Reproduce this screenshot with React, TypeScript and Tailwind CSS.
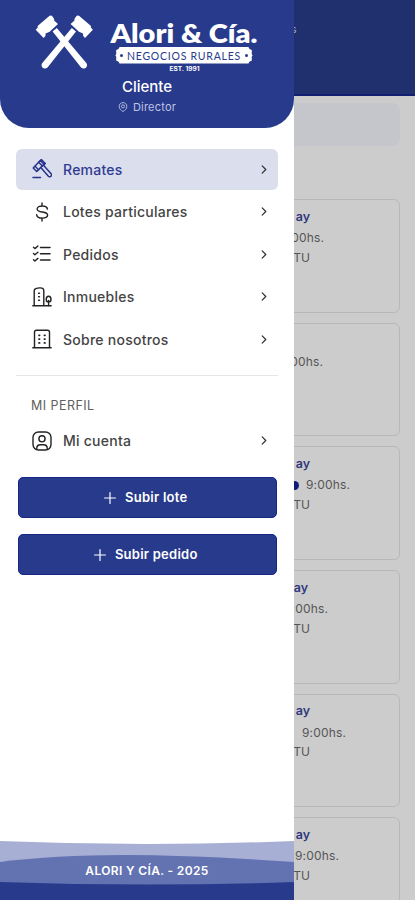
import React from "react";
import { clsx } from "clsx";

type IconProps = { className?: string };

const Svg = ({ className, children }: IconProps & { children: React.ReactNode }) => (
  <svg viewBox="0 0 20 20" className={clsx("size-5 shrink-0", className)} fill="none" stroke="currentColor" strokeWidth="1.4" strokeLinecap="round" strokeLinejoin="round">
    {children}
  </svg>
);

const GavelIcon = () => (
  <Svg>
    <g strokeWidth="1.5">
      <path d="m8.300 1.500 3.800 3.600-7.400 7.400L1.200 9z" />
      <path d="m8.300 1.500 1-.9 4 3.900-1.200 1.100M6.600 3.300l3.800 3.600M3 7.200l3.700 3.500" />
      <path d="m8.800 8.500 7.600 8.800c1.700 1.500 4.200-.8 2.700-2.500L11.500 6.200M1 18.400h7.500" />
    </g>
  </Svg>
);

const DollarIcon = () => (
  <Svg>
    <path d="M10 1v3M10 16v3M15.4 7.1C15.2 5.2 13.2 4 10.2 4 7.3 4 5.100 5 5.100 7c0 4.400 10.500 1.600 10.500 6 0 2-2.200 3.100-5.300 3.100-3.400 0-5.500-1.300-5.700-3.500" />
  </Svg>
);

const ListIcon = () => (
  <Svg>
    <path d="M8.500 3.500H18M8.500 9.700H18M8.500 15.900H18" strokeWidth="1.500" />
    <path d="m1.500 3.300 1.400 1.300 3-2.600m-4.400 7.500 1.400 1.300 3-2.600m-4.400 7.500 1.400 1.300 3-2.600" strokeWidth="1.400" />
  </Svg>
);

const EstateIcon = () => (
  <Svg>
    <path d="M.8 18.700h18.400M2.200 18.500V3.900c0-1.400.8-2.200 2.200-2.500l3-.5c2.900-.3 4.400.7 4.400 2.800v14.800" />
    <path d="M16.600 18.500v-5M16.600 15c-1.500 0-2.400-1-2.400-2.500 0-1.800 1-3.300 2.400-3.300s2.400 1.500 2.400 3.300c0 1.500-.9 2.500-2.400 2.500Z" />
    <path d="M6.700 6.200h.7M6.700 9.700h.7M6.700 13.200h.7" strokeWidth="1.600" />
  </Svg>
);

const BuildingIcon = () => (
  <Svg>
    <path d="M.8 18.800h18.400M2.500 18.600V3.200c0-1.200.7-1.900 1.900-1.900h11.200c1.200 0 1.900.7 1.900 1.900v15.400" />
    <path d="M7 6.300h.6M12.400 6.300h.6M7 10.100h.6M12.400 10.100h.6M7 13.900h.6M12.400 13.900h.6" strokeWidth="1.700" />
  </Svg>
);

const AccountIcon = () => (
  <Svg>
    <rect x="1" y="1" width="18" height="18" rx="5.500" />
    <circle cx="10" cy="7.800" r="3.100" />
    <path d="M4.800 18.300v-1.100c0-2.200 1.500-3.500 3.700-3.500h3c2.200 0 3.700 1.300 3.700 3.500v1.100" />
  </Svg>
);

const Chevron = () => (
  <svg viewBox="0 0 6 10" className="ml-auto h-[9px] w-[6px]" fill="none" stroke="#333" strokeWidth="1.400" strokeLinecap="round" strokeLinejoin="round">
    <path d="m1 1 4 4-4 4" />
  </svg>
);

const Plus = () => (
  <svg viewBox="0 0 12 12" className="size-3" fill="none" stroke="currentColor" strokeWidth="1.200" strokeLinecap="round">
    <path d="M6 .6v10.800M.6 6h10.800" />
  </svg>
);

const Hammer = () => (
  <>
    <path d="m35.700 29.700 2.100-2.200-.2-1.600 12-10.200 1.700-.1 1 .6 1.900 2.700-.1 1.500 3.900 3.700-8.400 7.600-4 1.800-.2 2.600-1.800 1.900z" />
    <path d="m52.600 31.500 4.200-3.600 29.300 34.800c3 3.700-1.800 7.800-5 4.700z" />
  </>
);

const Logo = () => (
  <svg viewBox="0 0 294 80" className="h-20 w-[294px] shrink-0" fill="#fff">
    <Hammer />
    <g transform="matrix(-1 0 0 1 128.600 0)">
      <Hammer />
    </g>
    <text x="110.500" y="42.500" fontFamily="Lato, sans-serif" fontWeight="800" fontSize="26.500" textLength="147" lengthAdjust="spacingAndGlyphs">Alori &amp; Cía.</text>
    <path d="M119.500 47h129c.3 1.600 1.500 2.700 3.300 2.900v2.300c-.3 1.900.2 2.700 1 3.100-.8.800-1.300 1.600-1 3.400v2.100c-1.800.2-3 1.200-3.300 2.800h-129c-.3-1.600-1.500-2.600-3.300-2.800v-2.100c.3-1.800-.2-2.600-1-3.400.8-.4 1.300-1.200 1-3.100v-2.300c1.800-.2 3-1.300 3.300-2.900z" />
    <circle cx="121.500" cy="55.600" r="1.500" fill="#283a8b" />
    <circle cx="246.500" cy="55.600" r="1.500" fill="#283a8b" />
    <text x="127" y="59.500" fill="#283a8b" fontFamily="Lato, sans-serif" fontWeight="400" fontSize="11" letterSpacing="0.800" textLength="114" lengthAdjust="spacingAndGlyphs">NEGOCIOS RURALES</text>
    <text x="169.500" y="71.200" fontFamily="Inter, sans-serif" fontWeight="700" fontSize="5.600" textLength="30" lengthAdjust="spacingAndGlyphs">EST. 1991</text>
  </svg>
);

const Item = ({ icon, label, active }: { icon: React.ReactNode; label: string; active?: boolean }) => (
  <div className="h-[42.500px]">
    <div className={clsx("flex h-[41.500px] items-center rounded-md pr-[11.500px] pl-4 text-sm leading-5 font-medium tracking-[0.250px]", active ? "bg-[#dadeed] text-[#303b91]" : "text-[#444]")}>
      <span className={active ? "text-[#28338b]" : "text-[#222]"}>{icon}</span>
      <span className="ml-[11px] pt-px">{label}</span>
      <Chevron />
    </div>
  </div>
);

const Action = ({ label }: { label: string }) => (
  <button className="flex h-[41.500px] items-center justify-center gap-[9px] rounded-[5px] border border-[#172583] bg-[#283a8b] pt-px pr-[3px] text-[13px] font-semibold tracking-[0.250px] text-white">
    <Plus />
    {label}
  </button>
);

const cards = [
  { title: "ay", titleEnd: "pr-[89px]", time: "9:00hs.", timeEnd: "pr-[75px]", place: "TU" },
  { title: "", titleEnd: "", time: "9:00hs.", timeEnd: "pr-[76px]", place: "" },
  { title: "ay", titleEnd: "pr-[89px]", time: "9:00hs.", timeEnd: "pr-[49px]", place: "TU", marker: true },
  { title: "ay", titleEnd: "pr-[91px]", time: "9:00hs.", timeEnd: "pr-[71px]", place: "TU" },
  { title: "ay", titleEnd: "pr-[89px]", time: "9:00hs.", timeEnd: "pr-[53px]", place: "TU" },
  { title: "ay", titleEnd: "pr-[89px]", time: "9:00hs.", timeEnd: "pr-[60px]", place: "TU" },
];

export default function App() {
  return (
    <div className="relative h-[900px] w-[415px] overflow-hidden bg-[#ccc] font-['Inter',sans-serif]">
      <div className="flex h-full flex-col">
        <div className="h-24 shrink-0 border-b-2 border-[#101f70] bg-[#20306f] pt-[21px] pr-[118.500px] text-right text-[10px] leading-4 text-[#a8b0ca]">s</div>
        <div className="mt-[7px] mr-[15px] ml-4 h-[43px] shrink-0 rounded-lg bg-[#c4c6cb]" />
        <div className="mt-[53px] mr-[15px] ml-4 flex flex-col gap-[10.200px]">
          {cards.map((card, i) => (
            <div key={i} className="h-[113.500px] shrink-0 rounded-md border border-[#b8b8b8] pt-[6.500px] text-right text-[12px] text-[#555]">
              <div className={clsx("h-[21px] text-[12.500px] leading-5 font-semibold text-[#30387c]", card.titleEnd)}>{card.title}</div>
              <div className={clsx("flex h-[21px] items-center justify-end gap-[7px] tracking-[0.150px]", card.timeEnd)}>
                {card.marker && <span className="h-[9px] w-[7px] rounded-r-full bg-[#101d78]" />}
                {card.time}
              </div>
              <div className="h-5 pr-[89px] leading-[18px]">{card.place}</div>
            </div>
          ))}
        </div>
      </div>

      <aside className="absolute inset-y-0 left-0 flex w-[294px] flex-col bg-white">
        <header className="flex h-32 shrink-0 flex-col items-center rounded-b-[29px] bg-[#283a8b] text-white">
          <Logo />
          <div className="-mt-0.5 text-[15px] leading-[18px] font-medium">Cliente</div>
          <div className="mt-[3px] flex items-center gap-[5px] text-[11px] leading-4 tracking-[0.200px] text-[#bdc4e2]">
            <svg viewBox="0 0 10 11" className="h-[10px] w-[10px]" fill="none" stroke="currentColor">
              <path d="M5 10.400C2.500 9.200.8 7.200.8 4.900A4.100 4.100 0 0 1 5 .7a4.100 4.100 0 0 1 4.200 4.200c0 2.300-1.700 4.300-4.200 5.500Z" />
              <circle cx="5" cy="4.800" r="1.700" />
            </svg>
            Director
          </div>
        </header>

        <nav className="mx-4 mt-[20.500px] flex flex-col border-b-[1.500px] border-[#e5e5e5] pb-[14px]">
          <Item icon={<GavelIcon />} label="Remates" active />
          <Item icon={<DollarIcon />} label="Lotes particulares" />
          <Item icon={<ListIcon />} label="Pedidos" />
          <Item icon={<EstateIcon />} label="Inmuebles" />
          <Item icon={<BuildingIcon />} label="Sobre nosotros" />
        </nav>

        <div className="mx-4 mt-5">
          <div className="pl-[15px] text-[12.500px] leading-5 tracking-[0.450px] text-[#606060]">MI PERFIL</div>
          <div className="mt-[4px]">
            <Item icon={<AccountIcon />} label="Mi cuenta" />
          </div>
        </div>

        <div className="mt-[14px] mr-[17.500px] ml-[18px] flex flex-col gap-[15.500px]">
          <Action label="Subir lote" />
          <Action label="Subir pedido" />
        </div>

        <footer className="relative mt-auto h-[60px] w-full shrink-0">
          <svg viewBox="0 0 294 60" className="block h-[60px] w-full">
            <path d="M0 1q147 6 294 0v59H0z" fill="#a7afd5" />
            <path d="M0 22Q55 15 125 15q70 0 169 7v38H0z" fill="#6372b0" />
            <path d="M0 42q147 5 294 0v18H0z" fill="#283a8b" />
          </svg>
          <div className="absolute inset-x-0 top-[22px] text-center text-[12px] leading-[18px] font-semibold tracking-[0.350px] text-white">ALORI Y CÍA. - 2025</div>
        </footer>
      </aside>
    </div>
  );
}
